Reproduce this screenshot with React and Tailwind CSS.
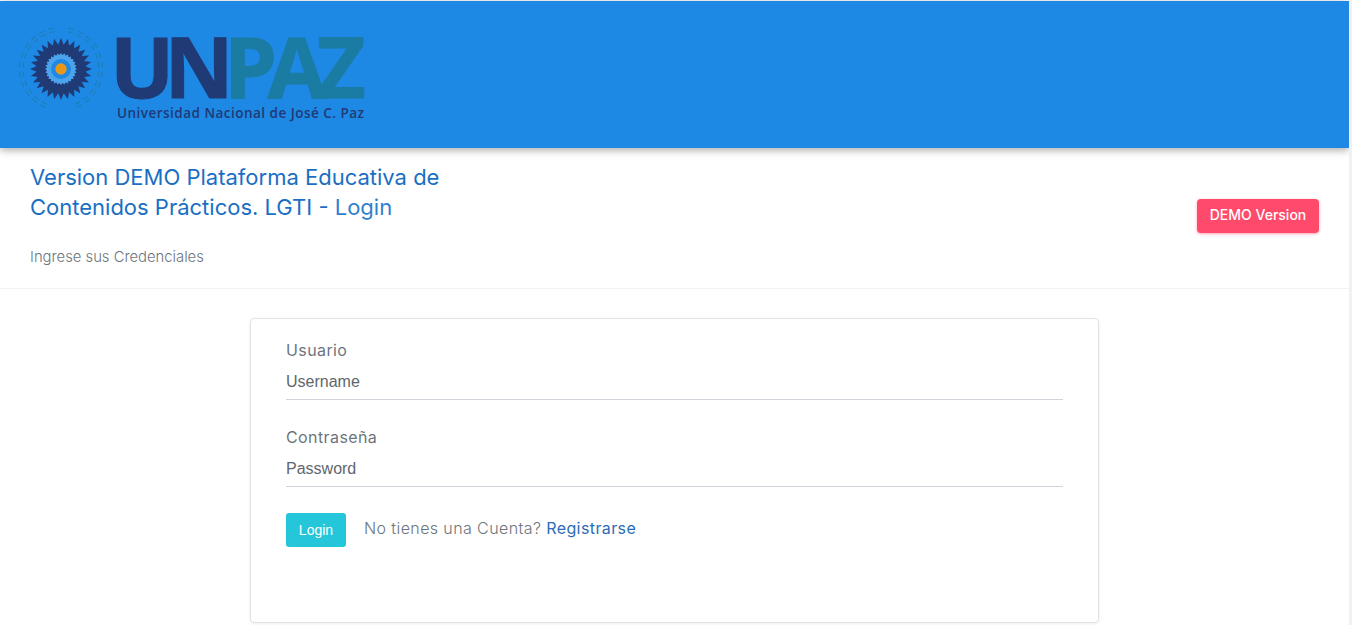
// App.jsx - UNPAZ demo login page
import React from 'react';

const poppins = { fontFamily: 'Inter, "Open Sans", sans-serif' };

// sun of the logo, points are computed so they stay even
const starPoints = (cx, cy, outer, inner, count) => {
  const pts = [];
  for (let i = 0; i < count * 2; i++) {
    const r = i % 2 === 0 ? outer : inner;
    const a = (Math.PI * i) / count - Math.PI / 2;
    pts.push(`${(cx + r * Math.cos(a)).toFixed(2)},${(cy + r * Math.sin(a)).toFixed(2)}`);
  }
  return pts.join(' ');
};

// dashes of the laurel wreath, mirrored on both sides
const wreathDashes = (cx, cy) => {
  const dashes = [];
  for (const r of [38, 41.5]) {
    for (let deg = 10; deg < 155; deg += 14) {
      const start = ((deg - 90) * Math.PI) / 180;
      const end = ((deg + 8 - 90) * Math.PI) / 180;
      for (const side of [1, -1]) {
        dashes.push(
          `M${cx + side * r * Math.cos(start)} ${cy + r * Math.sin(start)}L${cx + side * r * Math.cos(end)} ${cy + r * Math.sin(end)}`
        );
      }
    }
  }
  return dashes.join('');
};

const Logo = () => (
  <div className="flex items-start">
    <svg width="86" height="88" viewBox="0 0 86 88" className="mt-[25px] ml-[18px] shrink-0">
      <path d={wreathDashes(43, 43)} stroke="#1d7ea8" strokeWidth="1.2" fill="none" opacity="0.8" />
      <polygon points={starPoints(43, 43, 31, 24.5, 28)} fill="#1f3a75" />
      <polygon points={starPoints(43, 43, 16, 14, 28)} fill="#4ba3ec" />
      <circle cx="43" cy="43" r="10" fill="#1e88e5" />
      <circle cx="43" cy="43" r="5.7" fill="#e8971a" />
    </svg>
    <div className="ml-[6px] mt-[33px] w-[260px]" style={{ fontFamily: '"Open Sans", sans-serif' }}>
      <div className="h-[62px] text-[85px] leading-[62px] font-bold tracking-[-9.75px] [-webkit-text-stroke:1px] whitespace-nowrap">
        <span className="text-[#1f3a75]">UN</span>
        <span className="text-[#1b7ca3]">PAZ</span>
      </div>
      <div className="mt-[8px] ml-[7px] text-[13.5px] leading-[18px] font-semibold tracking-[0.48px] text-[#1f3a75] whitespace-nowrap">
        Universidad Nacional de José C. Paz
      </div>
    </div>
  </div>
);

const Field = ({ label, placeholder }) => (
  <div className="mb-[27px]">
    <div className="h-[22px] text-[16px] leading-[20px] tracking-[0.4px] text-[#6c757d]" style={poppins}>{label}</div>
    <div
      className="h-[37px] mt-[1px] border-b border-[#ced4da] text-[16px] leading-[38px] text-[#5f666c]"
      style={{ fontFamily: '"Liberation Sans", Arial, sans-serif' }}
    >
      {placeholder}
    </div>
  </div>
);

const App = () => {
  return (
    <div className="flex h-[625px] overflow-hidden bg-white">
      <div className="flex-1 min-w-0">
        <div className="h-[147px] mt-[1px] bg-[#1e88e5] shadow-[0_2px_8px_rgba(0,0,0,0.35)]">
          <Logo />
        </div>

        <div className="flex justify-between items-start h-[141px] pt-[14px] px-[30px] border-b border-[#f0f2f4]" style={poppins}>
          <div className="w-[430px]">
            <h1 className="text-[22px] leading-[30px] text-[#1a6fc4]">
              Version DEMO Plataforma Educativa de Contenidos Prácticos. LGTI - <span className="text-[#2f80d0]">Login</span>
            </h1>
            <p className="mt-[25px] text-[14.8px] leading-[20px] font-light text-[#6c757d]">Ingrese sus Credenciales</p>
          </div>
          <button className="w-[122px] h-[34px] mt-[37px] pb-[4px] rounded-[4px] bg-[#ff4a6b] text-white text-[14px] font-medium shadow-[0_1px_3px_rgba(255,74,107,0.5)]">
            DEMO Version
          </button>
        </div>

        <div className="ml-[250px] mt-[29px] w-[849px] h-[305px] border border-[#dfe3e6] rounded-[4px] pt-[21px] px-[35px] shadow-[0_1px_3px_rgba(0,0,0,0.08)]">
          <Field label="Usuario" placeholder="Username" />
          <Field label="Contraseña" placeholder="Password" />
          <div className="flex items-center -mt-[1px]">
            <button
              className="w-[60px] h-[34px] rounded-[3px] bg-[#26c6da] text-white text-[14px]"
              style={{ fontFamily: '"Liberation Sans", Arial, sans-serif' }}
            >
              Login
            </button>
            <span className="ml-[18px] mb-[4px] text-[16px] tracking-[0.4px] font-light text-[#6c757d]" style={poppins}>
              No tienes una Cuenta? <span className="text-[#2b6cb8] font-normal">Registrarse</span>
            </span>
          </div>
        </div>
      </div>
      <div className="w-[3px] bg-[#f1f1f1]" />
    </div>
  );
};

export default App;
